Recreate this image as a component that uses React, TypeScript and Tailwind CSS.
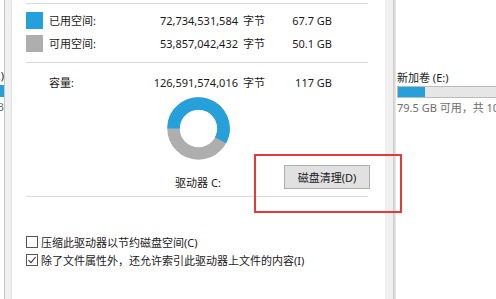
import React from 'react';

// ────────────────────────────────────────────
// Small pieces
// ────────────────────────────────────────────

const font = 'font-["Noto_Sans","Noto_Sans_CJK_SC",sans-serif]';

function Separator() {
  return <div className="h-px w-[342px] bg-[#dadada]" />;
}

function SpaceRow({ color, label, bytes, size }: { color?: string; label: string; bytes: string; size: string }) {
  return (
    <div className="flex h-[17px] items-center text-[11px] leading-none text-[#1a1a1a]">
      {color ? <div className="h-[17px] w-[17px]" style={{ background: color }} /> : <div className="w-[17px]" />}
      <div className="ml-[6px] w-[91px]">{label}</div>
      <div className="w-[98px] text-right">{bytes}</div>
      <div className="ml-[5px] w-[30px]">字节</div>
      <div className="w-[59px] text-right">{size}</div>
    </div>
  );
}

function Donut() {
  // used 67.7 / 117 -> ~208deg, starting at 9 o'clock going clockwise
  return (
    <svg width="63" height="63" viewBox="0 0 63 63">
      <circle cx="31.5" cy="31.5" r="25" fill="none" stroke="#aeaeae" strokeWidth="12.5" />
      <path d="M 6.5 31.5 A 25 25 0 1 1 53.57 43.24" fill="none" stroke="#26a0da" strokeWidth="12.5" />
    </svg>
  );
}

function Checkbox({ checked, label }: { checked?: boolean; label: string }) {
  return (
    <div className="flex h-[12px] items-center text-[11px] leading-none text-[#1a1a1a]">
      <div className="flex h-[12px] w-[12px] shrink-0 items-center justify-center border border-[#555] bg-white">
        {checked && (
          <svg width="10" height="10" viewBox="0 0 10 10">
            <path d="M1.5 5.2 L4 7.6 L8.6 2" fill="none" stroke="#333" strokeWidth="1.1" />
          </svg>
        )}
      </div>
      <span className="ml-[3px] whitespace-nowrap">{label}</span>
    </div>
  );
}

// ────────────────────────────────────────────
// App root
// ────────────────────────────────────────────

export default function App() {
  return (
    <div className={`relative flex h-[299px] w-[496px] overflow-hidden bg-white ${font}`}>
      {/* explorer content peeking on the left */}
      <div className="flex w-[4px] shrink-0 flex-col items-end overflow-hidden text-[11px] leading-none">
        <div className="mt-[70px] whitespace-nowrap text-[#1a1a1a]">(D:)</div>
        <div className="mt-[4px] h-[12px] w-[4px] shrink-0 bg-[#26a0da]" />
        <div className="mt-[4px] whitespace-nowrap text-[#6d6d6d]">GB</div>
      </div>
      <div className="w-px shrink-0 bg-[#c4c4c4]" />
      <div className="w-[6px] shrink-0 bg-[#f0f0f0]" />
      <div className="w-px shrink-0 bg-[#e2e2e2]" />

      {/* dialog tab page */}
      <div className="flex w-[373px] shrink-0 flex-col pl-[14px] pr-[15px]">
        <div className="mt-[3px]">
          <Separator />
        </div>
        <div className="mt-[8px]">
          <SpaceRow color="#26a0da" label="已用空间:" bytes="72,734,531,584" size="67.7 GB" />
        </div>
        <div className="mt-[6px]">
          <SpaceRow color="#aeaeae" label="可用空间:" bytes="53,857,042,432" size="50.1 GB" />
        </div>
        <div className="mt-[10px]">
          <Separator />
        </div>
        <div className="mt-[11px]">
          <SpaceRow label="容量:" bytes="126,591,574,016" size="117 GB" />
        </div>
        <div className="mt-[6px] grid grid-cols-[1fr_auto_1fr]">
          <div />
          <div className="flex flex-col items-center">
            <Donut />
            <div className="mt-[15px] h-[16px] whitespace-nowrap text-[11px] leading-[16px] text-[#1a1a1a]">驱动器 C:</div>
          </div>
          <div className="flex items-end justify-end pb-[2px]">
            <button className="h-[24px] w-[86px] border border-[#adadad] bg-[#e1e1e1] text-[11px] leading-none text-[#1a1a1a]">
              磁盘清理(D)
            </button>
          </div>
        </div>
        <div className="mt-[5px]">
          <Separator />
        </div>
        <div className="mt-[39px]">
          <Checkbox label="压缩此驱动器以节约磁盘空间(C)" />
        </div>
        <div className="mt-[6px]">
          <Checkbox checked label="除了文件属性外，还允许索引此驱动器上文件的内容(I)" />
        </div>
      </div>

      {/* dialog frame on the right */}
      <div className="w-[8px] shrink-0 bg-[#f0f0f0]" />
      <div className="w-[3px] shrink-0 bg-gradient-to-r from-[#c8c8c8] to-[#ececec]" />

      {/* explorer content on the right */}
      <div className="flex min-w-0 flex-1 flex-col overflow-hidden pl-[1px] text-[11px] leading-none">
        <div className="mt-[72px] whitespace-nowrap text-[#1a1a1a]">新加卷 (E:)</div>
        <div className="mt-[3px] flex h-[12px] w-[200px] border border-[#bcbcbc] bg-[#e6e6e6]">
          <div className="w-[27px] bg-[#26a0da]" />
        </div>
        <div className="mt-[4px] whitespace-nowrap text-[#6d6d6d]">79.5 GB 可用，共 100 GB</div>
      </div>

      {/* annotation */}
      <div className="absolute left-[254px] top-[154px] h-[59px] w-[148px] border-2 border-[#e53a3a]" />
    </div>
  );
}
